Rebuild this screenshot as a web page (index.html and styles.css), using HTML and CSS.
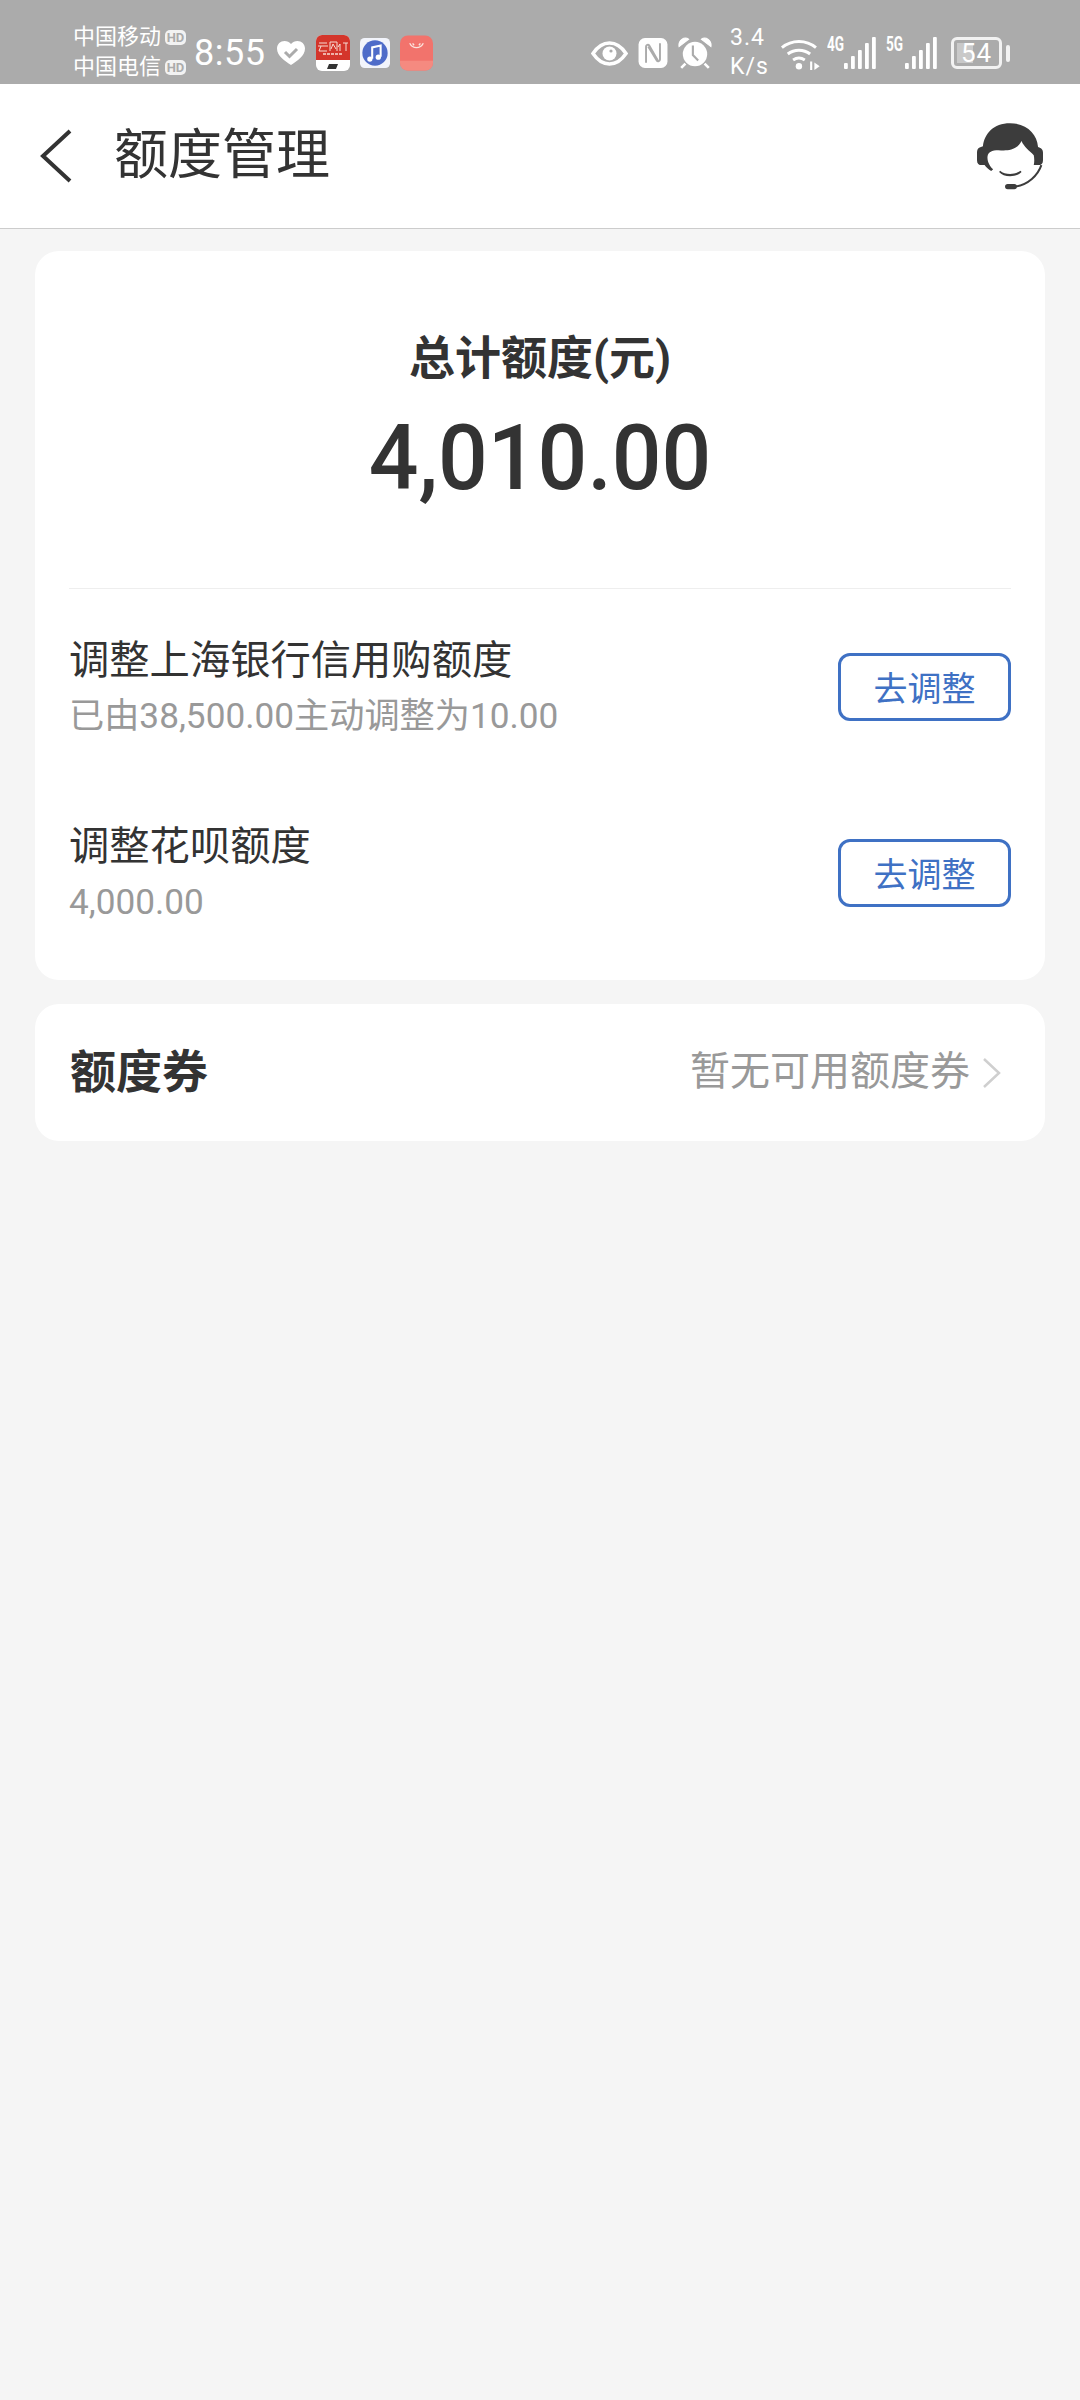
FILE: index.html
```html
<!DOCTYPE html>
<html lang="zh-CN">
<head>
<meta charset="utf-8">
<title>额度管理</title>
<link rel="stylesheet" href="styles.css">
</head>
<body>
<div class="status">
  <div class="carriers">
    <div class="carrier">中国移动<span class="hd">HD</span></div>
    <div class="carrier">中国电信<span class="hd">HD</span></div>
  </div>
  <div class="time">8:55</div>
  <svg class="i-heart" viewBox="0 0 30 26"><path d="M15 25C9 21 1 16 1 8.500C1 4 4.500 1 8.500 1C11 1 13.500 2 15 4C16.500 2 19 1 21.500 1C25.500 1 29 4 29 8.500C29 16 21 21 15 25Z" fill="#fff"/><path d="M9 12l4.500 4.500L21 9" fill="none" stroke="#ababab" stroke-width="3"/></svg>
  <svg class="i-app" viewBox="0 0 34 36"><rect width="34" height="36" rx="6" fill="#fff"/><path d="M0 6a6 6 0 0 1 6-6h22a6 6 0 0 1 6 6v19H0Z" fill="#d4352b"/><path d="M3 8h8M2 11h10M5 11l-2 5h8M14 7v9M14 7h7v9M17 9l-2 5M17 9l3 5M24 9l-2 3M24 9v7M27 8h5M30 8v8" stroke="#f6dcd4" stroke-width="1" fill="none"/><path d="M7 19h20" stroke="#f6dcd4" stroke-width="1.500" stroke-dasharray="3 1"/><path d="M13 29h9l-2 5h-9Z" fill="#333"/></svg>
  <svg class="i-music" viewBox="0 0 32 32"><rect width="32" height="32" rx="5" fill="#f2f4fb"/><circle cx="16" cy="16" r="13.500" fill="#4f6cc9"/><path d="M13 22V10l9-2v12" fill="none" stroke="#fff" stroke-width="2.200"/><circle cx="10.500" cy="22.500" r="2.800" fill="#fff"/><circle cx="19.500" cy="20.500" r="2.800" fill="#fff"/></svg>
  <svg class="i-shop" viewBox="0 0 34 36"><rect width="34" height="36" rx="8" fill="#f2736c"/><path d="M0 26h34v2a8 8 0 0 1-8 8H8a8 8 0 0 1-8-8Z" fill="#f58a80"/><path d="M10 8c3 6 11 6 14 0M13 8l1.500 2M21 8l-1.500 2" fill="none" stroke="#fbe3dc" stroke-width="1.400"/></svg>
  <div class="spacer"></div>
  <svg class="i-eye" viewBox="0 0 37 25"><path d="M2 12.500C7 5 12 2 18.500 2S30 5 35 12.500C30 20 25 23 18.500 23S7 20 2 12.500Z" fill="none" stroke="#fff" stroke-width="3.500"/><circle cx="18.500" cy="12.500" r="7" fill="#fff"/><circle cx="20" cy="10" r="1.600" fill="#ababab"/></svg>
  <svg class="i-nfc" viewBox="0 0 27 28"><rect width="27" height="28" rx="6" fill="#fff"/><path d="M7 23V8c0-1.500 2-2.500 3-1l8 14M20 5v15c0 1.500-2 2.500-3 1L9 8" fill="none" stroke="#ababab" stroke-width="1.800"/></svg>
  <svg class="i-alarm" viewBox="0 0 32 30"><circle cx="16" cy="16" r="11.500" fill="#fff"/><path d="M1 9C0 3 6 -1 10 2ZM31 9c1-6-5-10-9-7Z" fill="#fff" stroke="#fff"/><path d="M7 25l-4 4M25 25l4 4" fill="none" stroke="#fff" stroke-width="2.500"/><path d="M14 8v9l5 5" fill="none" stroke="#ababab" stroke-width="2"/></svg>
  <div class="speed"><div>3.4</div><div>K/s</div></div>
  <svg class="i-wifi" viewBox="0 0 37 31"><path d="M1.500 10a25 25 0 0 1 32 0M7 16a17 17 0 0 1 21 0M12 21.500a10 10 0 0 1 11 0" fill="none" stroke="#fff" stroke-width="2.800"/><circle cx="17.500" cy="27.500" r="3" fill="#fff"/><path d="M29 23v8" stroke="#fff" stroke-width="2"/><path d="M32 24l5 3.500-5 3.500Z" fill="#fff"/></svg>
  <div class="net"><span class="net-label">4G</span>
    <svg class="i-bars" viewBox="0 0 33 32"><g fill="#fff"><rect x="1" y="26" width="3.800" height="6" rx="1"/><rect x="8" y="19" width="3.800" height="13" rx="1"/><rect x="15" y="13" width="3.800" height="19" rx="1"/><rect x="22" y="6" width="3.800" height="26" rx="1"/><rect x="29" y="0" width="3.800" height="32" rx="1"/></g></svg>
  </div>
  <div class="net net-2"><span class="net-label">5G</span>
    <svg class="i-bars" viewBox="0 0 33 32"><g fill="#fff"><rect x="1" y="26" width="3.800" height="6" rx="1"/><rect x="8" y="19" width="3.800" height="13" rx="1"/><rect x="15" y="13" width="3.800" height="19" rx="1"/><rect x="22" y="6" width="3.800" height="26" rx="1"/><rect x="29" y="0" width="3.800" height="32" rx="1"/></g></svg>
  </div>
  <div class="battery"><div class="battery-body"><span class="battery-fill"></span><span class="battery-num">54</span></div><span class="battery-cap"></span></div>
</div>

<header class="nav">
  <svg class="back" viewBox="0 0 32 54"><path d="M30 2 3 27l27 25" fill="none" stroke="#333" stroke-width="4"/></svg>
  <h1 class="nav-title">额度管理</h1>
  <svg class="agent" viewBox="50 38 200 202"><path fill="#3c3c3c" d="M150 38C100 38 72 70 68 108L58 112C52 115 50 120 50 128V150C50 160 55 165 65 165H73C78 172 85 178 93 183L99 178C88 168 80 152 82 138C84 126 95 120 115 120C140 122 170 122 185 92C192 110 210 122 222 135C224 145 224 155 222 165H235C245 165 250 160 250 150V128C250 118 246 114 235 110C232 70 200 38 150 38Z"/><path fill="#3c3c3c" d="M120 182C135 195 165 195 182 182L185 186C170 203 130 203 117 186Z"/><path fill="none" stroke="#3c3c3c" stroke-width="6" d="M245 165C235 195 205 225 165 230"/><rect x="135" y="222" width="36" height="16" rx="8" fill="#3c3c3c"/></svg>
</header>

<main class="content">
  <section class="card limit">
    <div class="total">
      <div class="total-label">总计额度(元)</div>
      <div class="total-value">4,010.00</div>
    </div>
    <div class="row">
      <div class="row-text">
        <div class="row-title">调整上海银行信用购额度</div>
        <div class="row-sub">已由38,500.00主动调整为10.00</div>
      </div>
      <button class="adjust">去调整</button>
    </div>
    <div class="row">
      <div class="row-text">
        <div class="row-title">调整花呗额度</div>
        <div class="row-sub">4,000.00</div>
      </div>
      <button class="adjust">去调整</button>
    </div>
  </section>
  <section class="card coupon">
    <div class="coupon-title">额度券</div>
    <div class="coupon-note">暂无可用额度券</div>
    <svg class="chev" viewBox="0 0 20 32"><path d="M2 2l15 14L2 30" fill="none" stroke="#cfcfcf" stroke-width="2.500"/></svg>
  </section>
</main>
</body>
</html>
```
FILE: styles.css
```css
* { box-sizing: border-box; }
html, body { margin: 0; padding: 0; }
body {
  width: 1080px;
  height: 2400px;
  overflow: hidden;
  background: #f5f5f5;
  color: #333;
  font-family: Roboto, "Noto Sans CJK SC", sans-serif;
}
svg { display: block; flex: none; }

.status {
  height: 84px;
  background: #ababab;
  color: #fff;
  display: flex;
  align-items: center;
  padding: 22px 70px 0 73px;
}
.carriers { font-size: 22px; line-height: 30px; margin-top: -2px; width: 121px; }
.carrier { display: flex; align-items: center; gap: 4px; }
.hd {
  background: #f2f2f2; color: #ababab;
  font-size: 13px; font-weight: 700; line-height: 15px;
  width: 21px; height: 15px; text-align: center;
  border-radius: 5px;
}
.time { font-size: 36px; width: 71px; letter-spacing: .5px; margin-right: 11px; }
.i-heart { width: 30px; height: 26px; }
.i-app { width: 34px; height: 36px; margin-left: 10px; }
.i-music { width: 30px; height: 30px; margin-left: 10px; }
.i-shop { width: 33px; height: 36px; margin-left: 10px; }
.spacer { flex: 1; }
.i-eye { width: 37px; height: 25px; }
.i-nfc { width: 30px; height: 30px; margin-left: 10px; }
.i-alarm { width: 34px; height: 32px; margin-left: 10px; }
.speed { font-size: 23px; line-height: 29px; text-align: center; margin-left: 18px; width: 35px; white-space: nowrap; letter-spacing: 1px; margin-top: -2px; }
.i-wifi { width: 40px; height: 33px; margin-left: 15px; }
.net { display: flex; align-items: flex-start; margin-left: 7px; height: 32px; }
.net-2 { margin-left: 10px; }
.net-label { font-size: 20px; font-weight: 700; line-height: 15px; width: 16px; transform: scaleX(.68); transform-origin: left; }
.i-bars { width: 33px; height: 32px; }
.net-2 .net-label { width: 18px; }
.battery { display: flex; align-items: center; margin-left: 14px; gap: 4px; }
.battery-body {
  position: relative;
  width: 51px; height: 32px;
  border: 3px solid #f2f2f2; border-radius: 6px;
  display: flex; align-items: center; justify-content: center;
}
.battery-fill { position: absolute; left: 3px; top: 3px; bottom: 3px; width: 16px; background: #c9c9c9; }
.battery-num { position: relative; font-size: 26px; line-height: 26px; letter-spacing: 1px; }
.battery-cap { width: 4px; height: 17px; background: #f2f2f2; border-radius: 2px; }

.nav {
  height: 145px;
  background: #fff;
  border-bottom: 1px solid #ccc;
  display: flex;
  align-items: center;
  padding: 0 37px 0 40px;
}
.back { width: 32px; height: 54px; }
.nav-title { flex: 1; margin: 0 0 0 42px; font-size: 54px; font-weight: 400; line-height: 70px; }
.agent { width: 66px; height: 67px; }

.content { padding: 22px 35px 0; display: flex; flex-direction: column; gap: 24px; }
.card { background: #fff; border-radius: 24px; }
.limit { height: 729px; padding: 0 34px; }
.total { height: 338px; border-bottom: 1px solid #eee; text-align: center; padding-top: 77px; }
.total-label { font-size: 46px; font-weight: 700; line-height: 60px; }
.total-value { font-size: 90px; font-weight: 500; line-height: 110px; margin-top: 16px; transform: scaleX(.973); }
.row { height: 186px; padding-top: 9px; display: flex; align-items: center; justify-content: space-between; }
.row-text { margin-top: 1px; }
.row-title { font-size: 40.3px; line-height: 58px; }
.row-sub { font-size: 35.2px; line-height: 52px; color: #999; }
.adjust {
  width: 173px; height: 68px;
  border: 3px solid #3f71c4; border-radius: 12px;
  background: #fff; color: #3f71c4;
  font: 34px Roboto, "Noto Sans CJK SC", sans-serif;
  padding: 0;
}
.coupon { height: 137px; display: flex; align-items: center; padding: 0 43px 0 35px; }
.coupon-title { flex: 1; font-size: 46px; font-weight: 700; margin-top: -10px; }
.coupon-note { font-size: 40px; color: #999; margin-top: -9px; }
.chev { width: 20px; height: 32px; margin-left: 12px; }
```
